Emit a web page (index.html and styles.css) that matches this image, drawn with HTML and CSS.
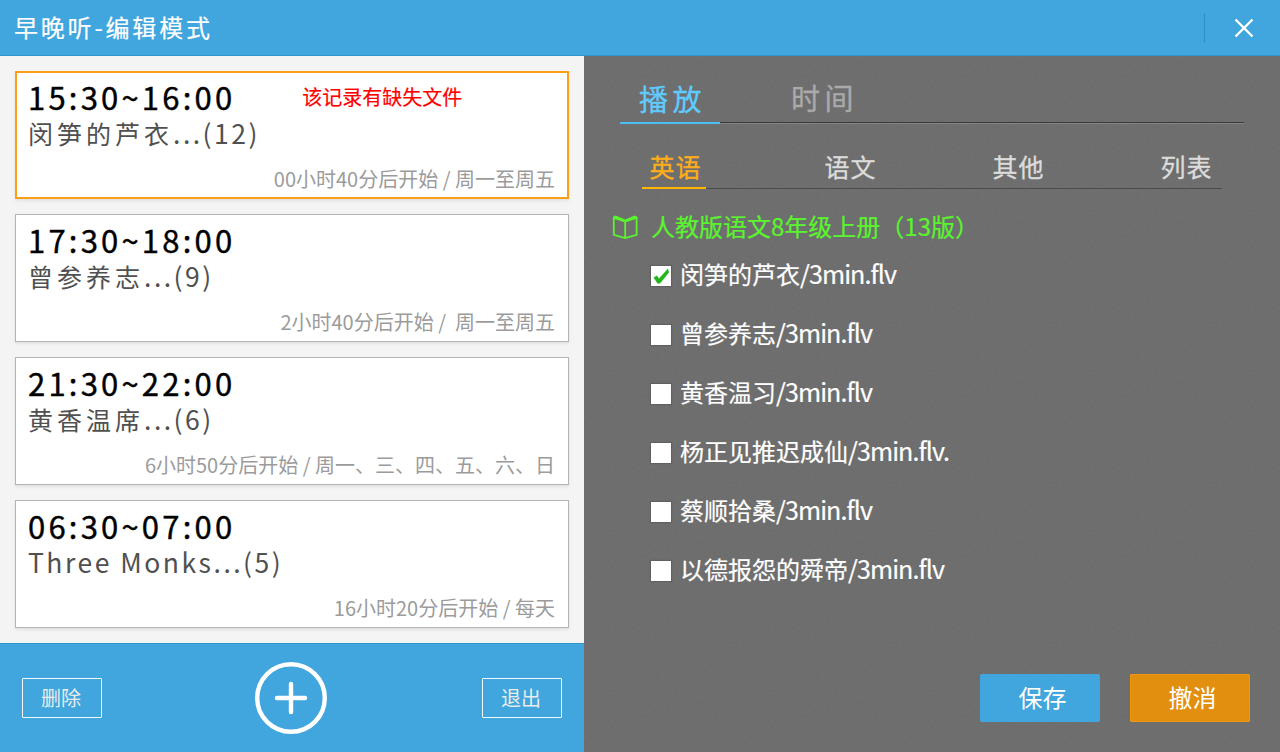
FILE: index.html
```html
<!DOCTYPE html>
<html lang="zh-CN">
<head>
  <meta charset="UTF-8" />
  <meta name="viewport" content="width=device-width, initial-scale=1" />
  <title>早晚听-编辑模式</title>
  <link rel="stylesheet" href="styles.css">
</head>
<body>
  <header class="topbar">
    <h1>早晚听-编辑模式</h1>
    <button class="btn-close" aria-label="关闭">
      <svg width="20" height="20" viewBox="0 0 20 20"><path d="M1.5 1.5L18.5 18.5M18.5 1.5L1.5 18.5" /></svg>
    </button>
  </header>

  <main class="content">
    <section class="left">
      <ul class="records">
        <li class="record selected">
          <div class="time">15:30~16:00<span class="warning">该记录有缺失文件</span></div>
          <div class="name">闵笋的芦衣<span class="latin">...(12)</span></div>
          <div class="meta">00小时40分后开始 / 周一至周五</div>
        </li>
        <li class="record">
          <div class="time">17:30~18:00</div>
          <div class="name">曾参养志<span class="latin">...(9)</span></div>
          <div class="meta">2小时40分后开始 /&nbsp; 周一至周五</div>
        </li>
        <li class="record">
          <div class="time">21:30~22:00</div>
          <div class="name">黄香温席<span class="latin">...(6)</span></div>
          <div class="meta">6小时50分后开始 / 周一、三、四、五、六、日</div>
        </li>
        <li class="record">
          <div class="time">06:30~07:00</div>
          <div class="name"><span class="latin">Three Monks...(5)</span></div>
          <div class="meta">16小时20分后开始 / 每天</div>
        </li>
      </ul>
      <footer class="toolbar">
        <button class="btn-outline">删除</button>
        <button class="btn-add" aria-label="添加">
          <svg width="72" height="72" viewBox="0 0 72 72"><circle cx="36" cy="36" r="33.8" /><path d="M36 22V50M22 36H50" /></svg>
        </button>
        <button class="btn-outline">退出</button>
      </footer>
    </section>

    <section class="right">
      <nav class="tabs">
        <a class="tab active">播放</a>
        <a class="tab">时间</a>
      </nav>
      <nav class="subtabs">
        <a class="subtab active">英语</a>
        <a class="subtab">语文</a>
        <a class="subtab">其他</a>
        <a class="subtab">列表</a>
      </nav>
      <h2 class="book">
        <svg width="26" height="26" viewBox="0 0 26 26">
          <path class="line" d="M1.8 3.5V20.8L13.2 24L24.6 20.8V3.5M13.2 7V24" />
          <path class="cover" d="M1 2.8L3.5 1.4L13.2 5.6L22.8 1.4L25.4 2.8V4.6L13.2 8.4L1 4.6Z" />
        </svg>
        <span>人教版语文8年级上册（13版）</span>
      </h2>
      <ul class="files">
        <li><label><input type="checkbox" checked /><span>闵笋的芦衣<span class="ext">/3min.flv</span></span></label></li>
        <li><label><input type="checkbox" /><span>曾参养志<span class="ext">/3min.flv</span></span></label></li>
        <li><label><input type="checkbox" /><span>黄香温习<span class="ext">/3min.flv</span></span></label></li>
        <li><label><input type="checkbox" /><span>杨正见推迟成仙<span class="ext">/3min.flv.</span></span></label></li>
        <li><label><input type="checkbox" /><span>蔡顺拾桑<span class="ext">/3min.flv</span></span></label></li>
        <li><label><input type="checkbox" /><span>以德报怨的舜帝<span class="ext">/3min.flv</span></span></label></li>
      </ul>
      <div class="actions">
        <button class="btn-save">保存</button>
        <button class="btn-cancel">撤消</button>
      </div>
    </section>
  </main>
</body>
</html>
```
FILE: styles.css
```css
* {
  box-sizing: border-box;
}
body {
  margin: 0;
  width: 1280px;
  height: 752px;
  display: flex;
  flex-direction: column;
  overflow: hidden;
  font-family: "Noto Sans CJK SC", sans-serif;
}
h1, h2, ul {
  margin: 0;
  padding: 0;
  font-weight: 400;
  list-style: none;
}
button {
  border: none;
  padding: 0;
  background: none;
  font-family: inherit;
  color: #fff;
  cursor: pointer;
}
svg {
  display: block;
  fill: none;
}

/* top bar */
.topbar {
  height: 56px;
  flex: none;
  display: flex;
  justify-content: space-between;
  align-items: center;
  padding-left: 14px;
  background: #40a6dd;
  border-bottom: 1px solid #2f93cc;
}
.topbar h1 {
  margin-top: -2px;
  color: #fff;
  font-size: 24px;
  letter-spacing: 2.8px;
  -webkit-text-stroke: 0.2px;
}
.btn-close {
  width: 76px;
  height: 30px;
  border-left: 1px solid #2f8fc4;
  display: flex;
  align-items: center;
  padding-left: 29px;
}
.btn-close svg {
  stroke: #fff;
  stroke-width: 2.4;
}
.content {
  flex: 1;
  display: flex;
}

/* record list */
.left {
  width: 584px;
  display: flex;
  flex-direction: column;
  background: #f4f4f4;
}
.records {
  flex: 1;
  padding: 15px;
  display: flex;
  flex-direction: column;
  gap: 15px;
}
.record {
  height: 128px;
  padding: 6px 13px 0 12px;
  border: 1px solid #b4b4b4;
  background: #fff;
  box-shadow: 0 2px 3px rgba(0,0,0,0.08);
}
.record.selected {
  border: 2px solid #fc9e16;
  padding: 5px 12px 0 11px;
}
.time {
  display: flex;
  height: 37px;
  line-height: 37px;
  color: #000;
  font-size: 31px;
  letter-spacing: 3.2px;
  -webkit-text-stroke: 0.4px;
}
.warning {
  margin-left: 67px;
  color: #f00;
  font-size: 20px;
  letter-spacing: 0;
  -webkit-text-stroke: 0.2px;
}
.name {
  height: 36px;
  line-height: 36px;
  color: #505050;
  font-size: 25px;
  letter-spacing: 4px;
  white-space: nowrap;
}
.latin {
  font-size: 26.5px;
  line-height: 1;
  letter-spacing: 2.5px;
}
.meta {
  margin-top: 12px;
  line-height: 32px;
  color: #9b9b9b;
  font-size: 20px;
  text-align: right;
}
.toolbar {
  height: 109px;
  display: flex;
  justify-content: space-between;
  align-items: center;
  padding: 0 22px 1px;
  background: #40a6dd;
  border-top: 1px solid #2f93cc;
}
.btn-outline {
  width: 80px;
  height: 40px;
  padding: 0 2px 1px 0;
  border: 1px solid #f2f9fd;
  border-radius: 1px;
  font-size: 20px;
  color: #ebebeb;
}
.btn-add {
  margin-right: 2px;
}
.btn-add svg {
  stroke: #fff;
  stroke-width: 4.4;
  stroke-linecap: round;
}

/* player panel */
.right {
  flex: 1;
  display: flex;
  flex-direction: column;
  padding: 15px 30px 30px 28px;
  background-color: #6b6b6b;
  background-image: url("data:image/svg+xml,%3Csvg xmlns='http://www.w3.org/2000/svg' width='160' height='160'%3E%3Cfilter id='n'%3E%3CfeTurbulence type='fractalNoise' baseFrequency='.5' numOctaves='2' stitchTiles='stitch'/%3E%3CfeColorMatrix type='saturate' values='0'/%3E%3C/filter%3E%3Crect width='160' height='160' filter='url(%23n)' opacity='.07'/%3E%3C/svg%3E");
}
.tabs {
  width: 624px;
  height: 53px;
  margin-left: 8px;
  display: flex;
  gap: 53px;
  border-bottom: 1px solid #868686;
  box-shadow: inset 0 -1px #3a3a3a;
}
.tab {
  width: 100px;
  height: 53px;
  line-height: 55px;
  padding-left: 5px;
  text-align: center;
  color: #aaa;
  font-size: 29px;
  letter-spacing: 4.5px;
  -webkit-text-stroke: 0.3px;
}
.tab:last-child {
  line-height: 53px;
  padding-left: 3px;
}
.tab.active {
  color: #5fcbff;
  border-bottom: 2px solid #4dbdf5;
}
.subtabs {
  width: 580px;
  height: 65px;
  margin-left: 30px;
  display: flex;
  gap: 104px;
  align-items: flex-end;
  border-bottom: 1px solid #4b4b4b;
}
.subtab {
  width: 64px;
  height: 45px;
  line-height: 45px;
  margin-bottom: -1px;
  padding-left: 3px;
  text-align: center;
  color: #dcdcdc;
  font-size: 25px;
  letter-spacing: 1px;
  -webkit-text-stroke: 0.3px;
}
.subtab.active {
  margin-right: 7px;
  color: #ffae1a;
  border-bottom: 2px solid #ffb400;
}
.book {
  height: 36px;
  margin-top: 20px;
  display: flex;
  align-items: center;
  gap: 13px;
  color: #5af52d;
  font-size: 24px;
}
.book span {
  margin-top: -4px;
  -webkit-text-stroke: 0.2px;
}
.book .line {
  stroke: #5af52d;
  stroke-width: 1.8;
}
.book .cover {
  fill: #5af52d;
}
.files {
  flex: 1;
  margin: -1px 0 0 39px;
}
.files li {
  height: 59.2px;
}
.files label {
  display: flex;
  align-items: center;
  gap: 9px;
  height: 59px;
  line-height: 36px;
  color: #fff;
  font-size: 24px;
  -webkit-text-stroke: 0.2px;
}
.ext {
  font-size: 25px;
  line-height: 1;
  letter-spacing: -0.9px;
}
.files input {
  appearance: none;
  width: 20px;
  height: 20px;
  margin: 4px 0 0;
  background: #fff;
  box-shadow: 0 0 1px 1px rgba(0,0,0,0.12);
}
.files input:checked {
  background: #fff url("data:image/svg+xml,%3Csvg xmlns='http://www.w3.org/2000/svg' width='20' height='20'%3E%3Cpath d='M2.5 11.5L6 9.5L8 12.5L17 2.5L18 6.5L9 17.5H6.5Z' fill='%2326b51c'/%3E%3C/svg%3E");
}
.actions {
  display: flex;
  justify-content: flex-end;
  gap: 30px;
}
.actions button {
  width: 120px;
  height: 48px;
  padding: 0 0 3px 5px;
  border-radius: 2px;
  font-size: 24px;
}
.btn-save {
  background: #40a6dd;
}
.btn-cancel {
  background: #e28f10;
  box-shadow: inset 0 0 0 1px #f0960a;
}
```
